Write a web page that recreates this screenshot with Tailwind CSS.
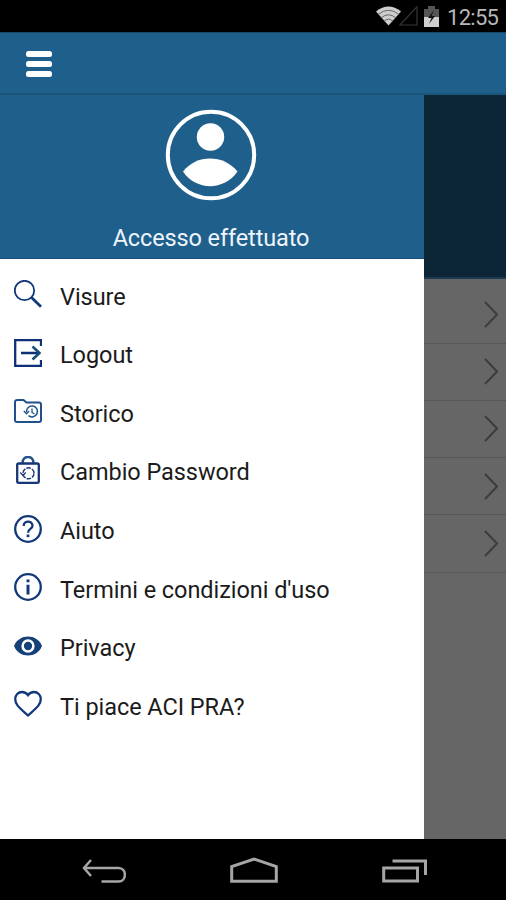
<!DOCTYPE html>
<html lang="it">
<head>
<meta charset="utf-8">
<title>ACI PRA</title>
<script src="https://cdn.jsdelivr.net/npm/@tailwindcss/browser@4"></script>
</head>
<body class="w-[506px] h-[900px] overflow-hidden bg-black font-['Roboto',sans-serif] flex flex-col">
  <header class="h-8 shrink-0 flex items-center justify-end pr-[7px] text-[#b8b8b8]">
    <svg class="w-[25px] h-[20px] mr-px" viewBox="0 0 25 20"><path d="M0 5.500Q12.500-4.500 25 5.500L12.500 19.500Z" fill="#cecece"/><path d="M2 8.500Q12.500 0 23 8.500M5 12Q12.500 5.500 20 12M8 15.300Q12.500 11 17 15.300" fill="none" stroke="#666" stroke-width="1"/></svg>
    <svg class="w-[19px] h-[20px] -ml-[3px]" viewBox="0 0 19 20"><path d="M18 .8V19H.8Z" fill="none" stroke="#363636" stroke-width="1.200"/></svg>
    <svg class="w-[15px] h-[21px] ml-[6px] mr-[8px]" viewBox="0 0 15 21"><path d="M0 3H4V0H11V3H15V11H0Z" fill="#555"/><path d="M0 11H15V21H0Z" fill="#cecece"/><path d="M10 4L4 12H7.500L5 18L11 10H7.500Z" fill="#111"/></svg>
    <span class="text-[22px] leading-8 w-[52px] whitespace-nowrap tracking-[-0.700px] pt-[3px]">12:55</span>
  </header>
  <nav class="h-[63px] shrink-0 bg-[#1f5f8b] border-t border-[#174865] border-b-2 border-b-[#1b5579] pl-[26px] pt-[2px] flex flex-col justify-center gap-1">
    <span class="block w-[26px] h-[6px] rounded-[2.500px] bg-white"></span>
    <span class="block w-[26px] h-[6px] rounded-[2.500px] bg-white"></span>
    <span class="block w-[26px] h-[6px] rounded-[2.500px] bg-white"></span>
  </nav>
  <main class="h-[744px] shrink-0 flex bg-[#666]">
    <aside class="w-[424px] bg-white flex flex-col">
      <div class="h-[164px] shrink-0 bg-[#1f5f8b] border-b border-[#174f78] flex flex-col items-center pt-[14px]">
        <svg class="w-[92px] h-[92px] -ml-[2px]" viewBox="0 0 92 92"><circle cx="46" cy="46" r="43.200" fill="none" stroke="#fff" stroke-width="4"/><circle cx="45.500" cy="28" r="13.700" fill="#fff"/><path d="M18 62.500C31 45 59 45 72.500 62.500C59 82 31 82 18 62.500Z" fill="#fff"/></svg>
        <p class="mt-[23px] text-[23.500px] tracking-[-0.120px] leading-[28px] text-[#edf4fa] whitespace-nowrap -ml-[2px]">Accesso effettuato</p>
      </div>
      <ul class="pt-[6px] pl-[14px] text-[23.500px] tracking-[-0.060px] text-[#1b1b1b] whitespace-nowrap [&>li]:h-[58.570px] [&>li]:flex [&>li]:items-center [&>li]:gap-[18px] [&_svg]:w-7 [&_svg]:h-7 [&_svg]:shrink-0 [&_span]:pt-[5px] [&_span]:leading-7">
        <li><svg viewBox="0 0 28 28" fill="none" stroke="#123879"><circle cx="10.500" cy="10.500" r="9.700" stroke-width="1.800"/><path d="M17.500 17.500L27 26.700" stroke-width="2.800"/></svg><span>Visure</span></li>
        <li><svg viewBox="0 0 28 28" fill="none" stroke="#0f2f78" stroke-width="2.300"><path d="M27 7V1.200H1.200V26.800H27V21M7 14H25.500" /><path d="M18.500 7.500L25.500 14L18.500 20.500" stroke="#164c78" stroke-width="2.500"/></svg><span>Logout</span></li>
        <li><svg viewBox="0 0 28 28" fill="none" stroke="#20518a" stroke-width="2"><path d="M3.500 3H9.500L12.500 5.500H25Q27 5.500 27 7.500V23Q27 25 25 25H3Q1 25 1 23V5Q1 3 3.500 3Z"/><path d="M12.500 15A5.500 5.500 0 1 1 14.500 18.700" stroke-width="1.500"/><path d="M9.800 14L12.500 16.800L15 14M18 11.500V15.500L20.500 17" stroke-width="1.300"/></svg><span>Storico</span></li>
        <li><svg viewBox="0 0 28 28" fill="none" stroke="#163675" stroke-width="2.300"><path d="M8.500 7C8.500-1 19.500-1 19.500 7" stroke="#20518a" stroke-width="2.500"/><rect x="3.200" y="7.500" width="21.600" height="19.300" rx="1.500"/><circle cx="14.500" cy="17.300" r="5.500" stroke-width="1.400" stroke-dasharray="4.600 1.160"/><path d="M6.300 16.500L9 19.500L11.700 16.500" stroke-width="1.300"/></svg><span>Cambio Password</span></li>
        <li><svg viewBox="0 0 28 28" fill="none" stroke="#123879" stroke-width="2.300"><circle cx="14" cy="14" r="12.800"/><path d="M9.700 11C9.700 5 18.500 5.200 18.500 10.800C18.500 14 14 14 14 17.800"/><path d="M14 19.500V22.200" stroke-width="2.700"/></svg><span>Aiuto</span></li>
        <li><svg viewBox="0 0 28 28" fill="none" stroke="#123879" stroke-width="2.300"><circle cx="14" cy="14" r="12.800"/><path d="M14 6.500V9.300M14 11.800V21.500" stroke-width="3"/></svg><span>Termini e condizioni d'uso</span></li>
        <li><svg viewBox="0 0 28 28"><path d="M0 14C5 1.300 23 1.300 28 14C23 26.700 5 26.700 0 14Z" fill="#154078"/><circle cx="14" cy="14" r="5.400" fill="#154078" stroke="#fff" stroke-width="2.500"/></svg><span>Privacy</span></li>
        <li><svg viewBox="0 0 28 28" fill="none" stroke="#123879" stroke-width="2.300"><path d="M14 25.500L11 22.800C4.500 17 1.200 14 1.200 9C1.200 5 4.200 2 8 2C10.500 2 12.700 3.300 14 5.200C15.300 3.300 17.500 2 20 2C23.800 2 26.800 5 26.800 9C26.800 14 23.500 17 17 22.800Z"/></svg><span>Ti piace ACI PRA?</span></li>
      </ul>
    </aside>
    <section class="w-[82px] flex flex-col">
      <div class="h-[184px] shrink-0 bg-[#0c2638] border-b-2 border-[#1d3c50]"></div>
      <div class="[&>div]:h-[57.300px] [&>div]:border-b-[1.500px] [&>div]:border-[#575757] [&>div]:flex [&>div]:items-center [&>div]:justify-end [&>div]:pr-[8px] [&_svg]:w-[14px] [&_svg]:h-[27px] [&_path]:fill-none [&_path]:stroke-[#3d3d3d] [&_path]:stroke-2">
        <div class="!h-[64.500px] pt-[8px]"><svg viewBox="0 0 14 27"><path d="M1 1L13 13.500L1 26"/></svg></div>
        <div><svg viewBox="0 0 14 27"><path d="M1 1L13 13.500L1 26"/></svg></div>
        <div><svg viewBox="0 0 14 27"><path d="M1 1L13 13.500L1 26"/></svg></div>
        <div><svg viewBox="0 0 14 27"><path d="M1 1L13 13.500L1 26"/></svg></div>
        <div><svg viewBox="0 0 14 27"><path d="M1 1L13 13.500L1 26"/></svg></div>
      </div>
    </section>
  </main>
  <footer class="grow bg-black flex items-start pl-[82px] [&_svg]:shrink-0">
    <svg class="w-[44px] h-[24px] mt-[20px]" viewBox="0 0 44 24" fill="none" stroke="#a6a6a6" stroke-width="2.500"><path d="M9 1L2 9L9 17M2 9H36.500C45 9 45 22.500 36.500 22.500H19.500"/></svg>
    <svg class="w-[48px] h-[26px] mt-[18px] ml-[104px]" viewBox="0 0 48 26" fill="none" stroke="#a6a6a6" stroke-width="3"><path d="M1.700 24.300V9.500L24 2L46.300 9.500V24.300Z"/></svg>
    <svg class="w-[46px] h-[24px] mt-[20px] ml-[104px]" viewBox="0 0 46 24" fill="none" stroke="#a6a6a6" stroke-width="3"><path d="M1.700 9V22H35.500V9ZM10.500 2H43.500V16"/></svg>
  </footer>
</body>
</html>
